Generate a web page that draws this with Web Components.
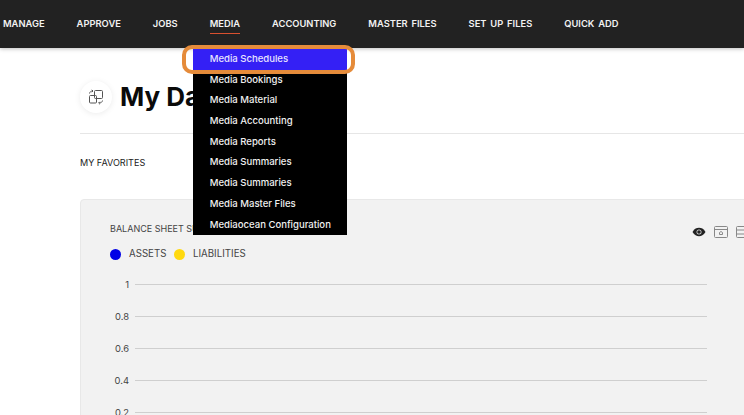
<!DOCTYPE html>
<html><head><meta charset="utf-8"><title>My Dashboard</title>
<style>
html,body{margin:0;padding:0;height:415px;overflow:hidden;background:#fff;font-family:Inter,"Liberation Sans",sans-serif}
</style></head><body>
<app-shell>
  <top-nav slot="nav">
    <nav-item>MANAGE</nav-item><nav-item>APPROVE</nav-item><nav-item>JOBS</nav-item>
    <nav-item active open>MEDIA<drop-menu slot="menu">
        <menu-row selected>Media Schedules</menu-row><menu-row>Media Bookings</menu-row><menu-row>Media Material</menu-row><menu-row>Media Accounting</menu-row><menu-row>Media Reports</menu-row><menu-row>Media Summaries</menu-row><menu-row>Media Summaries</menu-row><menu-row>Media Master Files</menu-row><menu-row>Mediaocean Configuration</menu-row>
      </drop-menu></nav-item>
    <nav-item>ACCOUNTING</nav-item><nav-item>MASTER FILES</nav-item><nav-item>SET UP FILES</nav-item><nav-item>QUICK ADD</nav-item>
  </top-nav>
  <page-head title-text="My Dashboard"></page-head>
  <fav-label>MY FAVORITES</fav-label>
  <chart-card></chart-card>
</app-shell>
<script>
function def(name, css, html){
  customElements.define(name, class extends HTMLElement{
    constructor(){super();const t=document.createElement('template');t.innerHTML='<style>'+css+'</style>'+html;this.attachShadow({mode:'open'}).appendChild(t.content.cloneNode(true));}
  });
}
def('app-shell',':host{display:block;width:744px;height:415px;overflow:hidden;position:relative}','<slot name="nav"></slot><slot></slot>');
def('top-nav',':host{display:flex;gap:32px;align-items:center;height:48px;padding-left:3px;background:#222;box-shadow:0 1px 4px rgba(0,0,0,.25);position:relative;z-index:2;box-sizing:border-box}','<slot></slot>');
def('nav-item',':host{display:block;position:relative;height:48px;box-sizing:border-box;padding-top:18px;font:600 9.35px/12px Inter,"Liberation Sans",sans-serif;word-spacing:1.500px;color:#f2f2f2;white-space:nowrap}:host([active])::after{content:"";position:absolute;left:0;right:0;top:33px;height:1px;background:#d9502f}','<slot></slot><slot name="menu"></slot>');
def('drop-menu',':host{display:block;position:absolute;left:-17px;top:48px;width:154px;height:187px;background:#000;padding-top:1px;box-sizing:border-box;word-spacing:0}.ring{position:absolute;left:-10.500px;top:-3.500px;width:172.500px;height:29.500px;box-sizing:border-box;border:4px solid #e58b3a;border-radius:10px;pointer-events:none}','<slot></slot><div class="ring"></div>');
def('menu-row',':host{display:block;height:20.700px;padding-left:17px;font:500 9.55px/20.700px Inter,"Liberation Sans",sans-serif;color:#f0f0f0;box-sizing:border-box;white-space:nowrap}:host([selected]){background:#3420f5;color:#e8e4ff}','<slot></slot>');
def('page-head',':host{display:flex;align-items:center;gap:8px;margin:32px 0 0 80px;padding-bottom:19px;height:34px;border-bottom:1px solid #e6e6e6}.c{width:32px;height:32px;border-radius:50%;background:#fff;box-shadow:0 1px 6px rgba(0,0,0,.08);display:flex;align-items:center;justify-content:center}h1{margin:0;font:700 26px/34px Inter,"Liberation Sans",sans-serif;color:#0a0a0a;white-space:nowrap}',
'<div class="c"><svg width="16" height="16" viewBox="0 0 16 16" fill="none" stroke="#555" stroke-width="1"><rect x="1.500" y="6.500" width="7" height="7.500" rx="1"/><rect x="6.500" y="1.500" width="8" height="8" rx="1"/><path d="M1.500 4.500C2 2.500 3.200 2 4.500 2M3.800.8 5 2 3.800 3.200M14.500 11.500C14 13.500 12.800 14 11 14M11.800 15.200 10.600 14l1.200-1.200"/></svg></div><h1>My Dashboard</h1>');
def('fav-label',':host{display:block;margin:23px 0 0 80px;font:400 9.05px/12px Inter,"Liberation Sans",sans-serif;color:#222;height:12px}','<slot></slot>');
def('chart-card',`:host{display:block;margin:30px 0 0 80px;width:720px;height:260px;background:#f2f2f2;border:1px solid #e8e8e8;border-radius:4px;box-sizing:border-box;padding:22px 29px;color:#444;font:400 9px/14px Inter,"Liberation Sans",sans-serif}
.top{display:flex;justify-content:space-between;height:14px}
.icons{display:flex;gap:8px;align-items:center;margin-top:5px;margin-right:20px}
.legend{display:flex;align-items:center;margin-top:11px;height:14px;font-size:9.700px}
.dot{width:11px;height:11px;border-radius:50%;margin-right:8px}
.plot{margin-top:7.500px;display:grid;grid-auto-rows:32px;width:597px}
.row{display:flex;align-items:center;gap:6px;height:32px;font-size:9.400px}
.row b{font-weight:400;width:19px;text-align:right;flex:none}.row i{flex:1;height:1px;background:#cfcfcf}`,
`<div class="top"><span>BALANCE SHEET SUMMARY</span><span class="icons">
<svg width="14" height="14" viewBox="0 0 14 14"><path d="M.5 7C2.500 3.600 4.600 2.800 7 2.800s4.500.8 6.500 4.200C11.500 10.400 9.400 11.200 7 11.200S2.500 10.400.5 7Z" fill="#222"/><circle cx="7" cy="7" r="2.500" fill="#d8d8d8"/><circle cx="7" cy="7" r="1.800" fill="#222"/></svg>
<svg width="14" height="14" viewBox="0 0 14 14" fill="none" stroke="#888"><rect x=".5" y="1.500" width="13" height="11" rx="1"/><path d="M.5 4.500h13"/><path d="M5.500 9.500V7.500L7 6.500l1.500 1v2z"/></svg>
<svg width="14" height="14" viewBox="0 0 14 14" fill="none" stroke="#888"><rect x=".5" y="1.500" width="13" height="11" rx="1"/><path d="M.5 5h13M.5 9h13"/></svg>
</span></div>
<div class="legend"><span class="dot" style="background:#0000e6"></span><span style="width:45px">ASSETS</span><span class="dot" style="background:#ffd90f"></span><span>LIABILITIES</span></div>
<div class="plot"><div class="row"><b>1</b><i></i></div><div class="row"><b>0.8</b><i></i></div><div class="row"><b>0.6</b><i></i></div><div class="row"><b>0.4</b><i></i></div><div class="row"><b>0.2</b><i></i></div></div>`);
</script>
</body></html>
